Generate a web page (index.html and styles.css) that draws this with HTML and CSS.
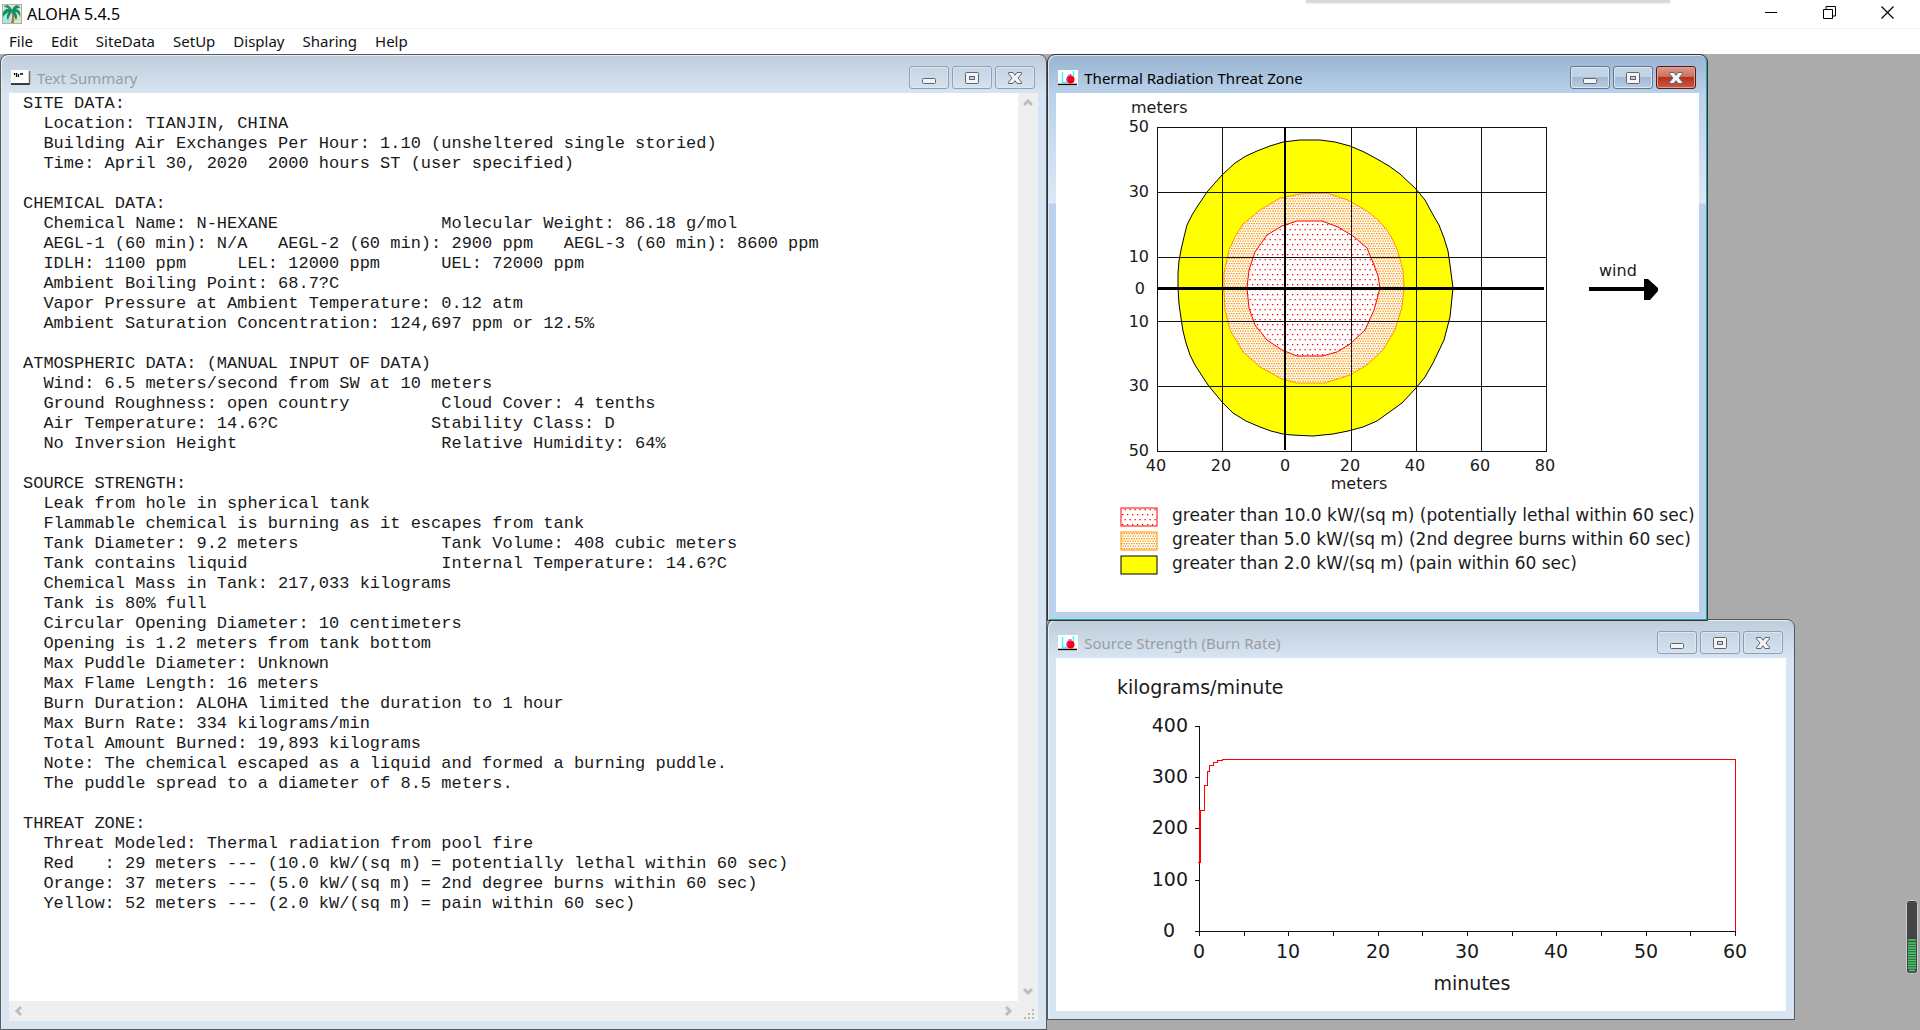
FILE: index.html
```html
<!DOCTYPE html>
<html lang="en">
<head>
    <meta charset="UTF-8">
    <meta name="viewport" content="width=device-width, initial-scale=1.0">
    <title>ALOHA 5.4.5</title>
    <link rel="stylesheet" href="styles.css">
</head>
<body>
    <!-- shared icons -->
    <svg class="defs" width="0" height="0" aria-hidden="true">
        <symbol id="icon-min" viewBox="0 0 16 14">
            <rect x="1.5" y="7.5" width="13" height="5" rx="1" fill="#f4f4f4" stroke="#5f6470"/>
        </symbol>
        <symbol id="icon-max" viewBox="0 0 16 14">
            <rect x="1.5" y="1.5" width="13" height="11" rx="1" fill="#f4f4f4" stroke="#5f6470"/>
            <rect x="5.5" y="5.5" width="5" height="3" fill="#c3d0de" stroke="#5f6470"/>
        </symbol>
        <symbol id="icon-close" viewBox="0 0 16 14">
            <path d="M1.5 1.5h4.5l2 2.8 2-2.8h4.5v1.300L11 7l3.500 4.200v1.300H10L8 9.700 6 12.500H1.500v-1.300L5 7 1.500 2.800z" fill="#f4f4f4" stroke="#5f6470"/>
        </symbol>
        <symbol id="icon-graph" viewBox="0 0 20 16">
            <rect width="20" height="16" fill="#fff"/>
            <path d="M4.500 2v10.500H9M10.500 4v4M15.500 1v5" fill="none" stroke="#3ff" stroke-width="1.500"/>
            <circle cx="12.500" cy="9.500" r="4" fill="#f00"/>
            <path d="M9.500 7v5M12.500 4v3" stroke="#f0f" stroke-width="1.500"/>
            <path d="M0 14.500h19" stroke="#000" stroke-width="1.500"/>
        </symbol>
    </svg>

    <header class="titlebar">
        <svg class="app-icon" viewBox="0 0 20 20" aria-hidden="true">
            <rect width="20" height="20" fill="#b0b0a8"/>
            <rect x="1" y="1" width="18" height="18" fill="#dde5c8"/>
            <path d="M1 8h7v11H1z" fill="#aee4e4"/>
            <path d="M9.500 8c1 3 .5 7-.5 11h3c.5-4 .3-8-.7-11z" fill="#a87850"/>
            <path d="M10 6C8 1 4 0 2 3c3 0 4 1 5 2C3 4 0 8 1 13c2-3 4-4 6-5-2 2-3 5-1 8 1-3 2-6 4-8 2 2 2 5 4 8 2-3 1-6-1-8 2 0 4 2 5 5 1-4 0-7-4-8 1-1 3-1 4-1-1-4-6-4-8 2z" fill="#0f8f6a"/>
        </svg>
        <h1 class="app-title">ALOHA 5.4.5</h1>
        <button class="sys-button" aria-label="Minimize">
            <svg width="13" height="13"><path d="M0 6.500h12" stroke="#000"/></svg>
        </button>
        <button class="sys-button" aria-label="Restore">
            <svg width="13" height="13"><path d="M.5 3.500h9v9h-9zM3 3V.5h9.500V10H10" fill="none" stroke="#000"/></svg>
        </button>
        <button class="sys-button" aria-label="Close">
            <svg width="13" height="13"><path d="M.5.5l12 12M12.500.5l-12 12" stroke="#000" stroke-width="1.200"/></svg>
        </button>
    </header>
    <div class="top-shade"></div>

    <nav class="menubar">
        <a href="#">File</a>
        <a href="#">Edit</a>
        <a href="#">SiteData</a>
        <a href="#">SetUp</a>
        <a href="#">Display</a>
        <a href="#">Sharing</a>
        <a href="#">Help</a>
    </nav>

    <main class="desktop">
        <section class="window text-window">
            <div class="caption">
                <svg class="caption-icon" viewBox="0 0 20 16" aria-hidden="true">
                    <rect width="18" height="14" fill="#fff"/>
                    <path d="M0 14h19" stroke="#000" stroke-width="1.500"/>
                    <path d="M18.500 1v13" stroke="#666" stroke-width="1.500"/>
                    <path d="M3.500 3v2M5.500 3v4M7.500 4v3M9 4h3" stroke="#000" stroke-width="1.300"/>
                </svg>
                <h2>Text Summary</h2>
                <button aria-label="Minimize"><svg><use href="#icon-min"/></svg></button>
                <button aria-label="Maximize"><svg><use href="#icon-max"/></svg></button>
                <button aria-label="Close"><svg><use href="#icon-close"/></svg></button>
            </div>
            <div class="text-client">
<pre class="report">SITE DATA:
  Location: TIANJIN, CHINA
  Building Air Exchanges Per Hour: 1.10 (unsheltered single storied)
  Time: April 30, 2020  2000 hours ST (user specified)

CHEMICAL DATA:
  Chemical Name: N-HEXANE                Molecular Weight: 86.18 g/mol
  AEGL-1 (60 min): N/A   AEGL-2 (60 min): 2900 ppm   AEGL-3 (60 min): 8600 ppm
  IDLH: 1100 ppm     LEL: 12000 ppm      UEL: 72000 ppm
  Ambient Boiling Point: 68.7?C
  Vapor Pressure at Ambient Temperature: 0.12 atm
  Ambient Saturation Concentration: 124,697 ppm or 12.5%

ATMOSPHERIC DATA: (MANUAL INPUT OF DATA)
  Wind: 6.5 meters/second from SW at 10 meters
  Ground Roughness: open country         Cloud Cover: 4 tenths
  Air Temperature: 14.6?C               Stability Class: D
  No Inversion Height                    Relative Humidity: 64%

SOURCE STRENGTH:
  Leak from hole in spherical tank
  Flammable chemical is burning as it escapes from tank
  Tank Diameter: 9.2 meters              Tank Volume: 408 cubic meters
  Tank contains liquid                   Internal Temperature: 14.6?C
  Chemical Mass in Tank: 217,033 kilograms
  Tank is 80% full
  Circular Opening Diameter: 10 centimeters
  Opening is 1.2 meters from tank bottom
  Max Puddle Diameter: Unknown
  Max Flame Length: 16 meters
  Burn Duration: ALOHA limited the duration to 1 hour
  Max Burn Rate: 334 kilograms/min
  Total Amount Burned: 19,893 kilograms
  Note: The chemical escaped as a liquid and formed a burning puddle.
  The puddle spread to a diameter of 8.5 meters.

THREAT ZONE:
  Threat Modeled: Thermal radiation from pool fire
  Red   : 29 meters --- (10.0 kW/(sq m) = potentially lethal within 60 sec)
  Orange: 37 meters --- (5.0 kW/(sq m) = 2nd degree burns within 60 sec)
  Yellow: 52 meters --- (2.0 kW/(sq m) = pain within 60 sec)</pre>
                <div class="scroll-v">
                    <button aria-label="Scroll up"><svg width="12" height="12"><path d="M2 8l4-4 4 4"/></svg></button>
                    <button aria-label="Scroll down"><svg width="12" height="12"><path d="M2 4l4 4 4-4"/></svg></button>
                </div>
                <div class="scroll-h">
                    <button aria-label="Scroll left"><svg width="12" height="12"><path d="M8 2L4 6l4 4"/></svg></button>
                    <button aria-label="Scroll right"><svg width="12" height="12"><path d="M4 2l4 4-4 4"/></svg></button>
                </div>
                <svg class="grip" viewBox="0 0 20 20" aria-hidden="true">
                    <path d="M6 16h2v2H6zM10 16h2v2h-2zM14 16h2v2h-2zM10 12h2v2h-2zM14 12h2v2h-2zM14 8h2v2h-2z" fill="#b8b8b8"/>
                </svg>
            </div>
        </section>

        <div class="plots">
            <section class="window active">
                <div class="caption">
                    <svg class="caption-icon" aria-hidden="true"><use href="#icon-graph"/></svg>
                    <h2>Thermal Radiation Threat Zone</h2>
                    <button aria-label="Minimize"><svg><use href="#icon-min"/></svg></button>
                    <button aria-label="Maximize"><svg><use href="#icon-max"/></svg></button>
                    <button class="close" aria-label="Close"><svg><use href="#icon-close"/></svg></button>
                </div>
                <svg class="plot" width="643" height="519" viewBox="0 0 643 519" role="img" aria-label="Thermal radiation threat zone">
                    <defs>
                        <pattern id="red-dots" width="5" height="10" patternUnits="userSpaceOnUse">
                            <rect width="5" height="10" fill="#fff"/>
                            <path d="M1 1h1.300v1.300H1zM3.500 6h1.300v1.300H3.500z" fill="#f00"/>
                        </pattern>
                        <pattern id="orange-dots" width="5" height="5" patternUnits="userSpaceOnUse">
                            <rect width="5" height="5" fill="#fff"/>
                            <path d="M0 0h1.500v1.300H0zM2.500 0H4v1.300H2.500zM1.300 2.500h1.500v1.300H1.300zM3.800 2.500H5v1.300H3.800z" fill="#ff9400"/>
                        </pattern>
                    </defs>
                    <polygon class="zone-yellow" points="257,47 264,47 279,49 294,53 308,59 321,66 333,73 344,81 360,96 369,107 376,120 383,132 388,145 392,158 394,172 397,195 394,224 388,247 377,270 369,284 360,295 346,310 321,328 307,334 292,338 277,341 257,343 236,342 227,341 215,338 204,334 190,328 177,320 166,309 152,292 139,272 134,262 130,250 127,238 125,225 123,211 122,195 122,180 123,168 125,157 128,144 131,132 136,122 141,114 151,99 166,82 179,70 190,63 201,58 214,53 227,49 244,47"/>
                    <polygon class="zone-orange" points="244,101 271,100 292,107 311,118 322,127 331,137 337,147 342,159 347,177 348,195 346,214 339,237 327,257 311,272 294,282 269,290 241,290 226,286 204,274 187,259 174,237 169,217 168,198 168,180 173,157 179,144 187,131 204,117 224,105"/>
                    <polygon class="zone-red" points="241,128 266,128 282,134 297,143 311,155 318,172 322,183 324,195 318,217 309,237 294,251 281,259 266,263 241,263 226,257 211,247 199,232 193,215 191,195 193,177 199,159 211,142 226,133"/>
                    <path class="grid" d="M101 34H490V358H101ZM166 34V358M295 34V358M360 34V358M425 34V358M101 99H490M101 164H490M101 228H490M101 293H490"/>
                    <path d="M229 34V357" stroke="#000" stroke-width="2"/>
                    <path d="M101 195.500H488" stroke="#000" stroke-width="3"/>
                    <text x="75" y="20">meters</text>
                    <g class="y-labels">
                        <text x="93" y="39">50</text>
                        <text x="93" y="104">30</text>
                        <text x="93" y="169">10</text>
                        <text x="89" y="201">0</text>
                        <text x="93" y="234">10</text>
                        <text x="93" y="298">30</text>
                        <text x="93" y="363">50</text>
                    </g>
                    <g class="x-labels">
                        <text x="100" y="378">40</text>
                        <text x="165" y="378">20</text>
                        <text x="229" y="378">0</text>
                        <text x="294" y="378">20</text>
                        <text x="359" y="378">40</text>
                        <text x="424" y="378">60</text>
                        <text x="489" y="378">80</text>
                        <text x="303" y="396">meters</text>
                    </g>
                    <text x="543" y="183">wind</text>
                    <path d="M533 194h55v-8h4l10 9v3l-8 9h-6v-9h-55z"/>
                    <rect class="zone-red" x="65" y="415" width="36" height="18"/>
                    <rect class="zone-orange" x="65" y="439" width="36" height="18"/>
                    <rect class="zone-yellow" x="65" y="463" width="36" height="18"/>
                    <g class="legend">
                        <text x="116" y="428">greater than 10.0 kW/(sq m) (potentially lethal within 60 sec)</text>
                        <text x="116" y="452">greater than 5.0 kW/(sq m) (2nd degree burns within 60 sec)</text>
                        <text x="116" y="476">greater than 2.0 kW/(sq m) (pain within 60 sec)</text>
                    </g>
                </svg>
            </section>

            <section class="window source-window">
                <div class="caption">
                    <svg class="caption-icon" aria-hidden="true"><use href="#icon-graph"/></svg>
                    <h2>Source Strength (Burn Rate)</h2>
                    <button aria-label="Minimize"><svg><use href="#icon-min"/></svg></button>
                    <button aria-label="Maximize"><svg><use href="#icon-max"/></svg></button>
                    <button aria-label="Close"><svg><use href="#icon-close"/></svg></button>
                </div>
                <svg class="plot plot-large" width="730" height="353" viewBox="0 0 730 353" role="img" aria-label="Burn rate">
                    <path class="grid" d="M143 68V273M139 68h4M139 119h4M139 170h4M139 222h4M139 273H679M143 273v5M188 273v5M232 273v5M277 273v5M322 273v5M366 273v5M411 273v5M456 273v5M500 273v5M545 273v5M590 273v5M634 273v5M679 273v5"/>
                    <path class="burn-rate" d="M142 204H144V152H148V127H151V113H153V107H157V104H161V102H166V101H679V273"/>
                    <path class="burn-rate" d="M143 204V152"/>
                    <text x="61" y="36">kilograms/minute</text>
                    <g class="y-labels">
                        <text x="132" y="74">400</text>
                        <text x="132" y="125">300</text>
                        <text x="132" y="176">200</text>
                        <text x="132" y="228">100</text>
                        <text x="119" y="279">0</text>
                    </g>
                    <g class="x-labels">
                        <text x="143" y="300">0</text>
                        <text x="232" y="300">10</text>
                        <text x="322" y="300">20</text>
                        <text x="411" y="300">30</text>
                        <text x="500" y="300">40</text>
                        <text x="590" y="300">50</text>
                        <text x="679" y="300">60</text>
                        <text x="416" y="332">minutes</text>
                    </g>
                </svg>
            </section>
        </div>
    </main>

    <!-- level gauge on the right edge -->
    <svg class="gauge" width="12" height="74" viewBox="0 0 12 74" aria-hidden="true">
        <rect x=".5" y=".5" width="11" height="73" rx="3" fill="#444" stroke="#ccc"/>
        <path d="M2 40h8M2 43h8M2 45.500h8M2 48h8M2 50.500h8M2 53h8M2 55.500h8M2 58h8M2 60.500h8M2 63h8M2 65.500h8M2 68h8M3 70.500h6" stroke="#3fd468" stroke-width="1.500"/>
    </svg>
</body>
</html>
```
FILE: styles.css
```css
* {
    box-sizing: border-box;
}
body {
    margin: 0;
    min-height: 100vh;
    display: flex;
    flex-direction: column;
    position: relative;
    background: #ababab;
    font-family: "Noto Sans", "Open Sans", sans-serif;
    font-size: 15px;
    color: #000;
}
h1, h2 {
    margin: 0;
    font-size: 15px;
    font-weight: normal;
}
button {
    padding: 0;
    border: none;
    background: none;
}
.defs {
    position: absolute;
}
.titlebar {
    display: flex;
    align-items: center;
    height: 28px;
    padding: 0 4px 0 2px;
    background: #fff;
}
.app-icon {
    width: 20px;
    height: 20px;
}
.app-title {
    flex: 1;
    padding-left: 5px;
    font-size: 16px;
}
.sys-button {
    width: 58px;
    height: 28px;
}
.top-shade {
    position: absolute;
    top: 0;
    left: 68%;
    width: 19%;
    height: 3px;
    background: #d8d8d8;
    box-shadow: 0 0 3px #ddd;
}
.menubar {
    display: flex;
    align-items: center;
    height: 26px;
    padding-bottom: 2px;
    border-top: 1px solid #f2f2f2;
    background: #fff;
}
.menubar a {
    padding: 0 9px;
    color: #111;
    text-decoration: none;
}
.desktop {
    flex: 1;
    display: grid;
    grid-template-columns: 6fr 5fr;
}
.plots {
    display: flex;
    flex-direction: column;
    align-items: flex-start;
}

/* MDI child windows */
.window {
    padding: 0 8px 8px;
    border: 1px solid #55585c;
    border-radius: 8px 8px 0 0;
    background: linear-gradient(#bfcddb, #d7e4f2 38px);
    box-shadow: inset 1px 1px 0 #e6eef6;
}
.window.active {
    position: relative;
    z-index: 1;
    border-color: #333;
    background: linear-gradient(#99b4d1, #b9d1ea 38px, #dce9f7 148px, #b9d1ea 149px);
    box-shadow: inset 1px 1px 0 #dbe8f5, inset -1px -1px 0 #1fa3ad;
}
.source-window {
    margin-top: -2px;
}
.caption {
    display: flex;
    align-items: center;
    gap: 3px;
    height: 38px;
    padding: 7px 3px 0 2px;
}
.caption h2 {
    flex: 1;
    padding-left: 3px;
    color: #9a9da0;
}
.active .caption h2 {
    color: #000;
}
.caption-icon {
    width: 20px;
    height: 16px;
}
.caption button {
    display: flex;
    align-items: center;
    justify-content: center;
    width: 40px;
    height: 23px;
    border: 1px solid #8e9fba;
    border-radius: 3px;
    box-shadow: inset 0 0 0 1px #dce6f1;
}
.caption button svg {
    width: 16px;
    height: 14px;
}
.active .caption button {
    border-color: #66788f;
    background: linear-gradient(#c2d3e6 50%, #a2b9d2 50%, #b8cde3);
}
.active .caption .close {
    border-color: #5a1a1c;
    background: linear-gradient(#dc9a8c, #cc6a58 50%, #b5301c 50%, #cc5a44);
    box-shadow: inset 0 0 0 1px #e0a090;
}

/* text summary */
.text-window {
    display: flex;
    flex-direction: column;
}
.text-client {
    flex: 1;
    display: grid;
    grid-template-columns: 1fr 20px;
    grid-template-rows: 1fr 20px;
    background: #efefef;
}
.report {
    margin: 0;
    padding: 1px 0 0 14px;
    overflow: hidden;
    background: #fff;
    color: #1a1a1a;
    font-family: "Liberation Mono", "Courier New", monospace;
    font-size: 17px;
    line-height: 20px;
}
.scroll-v, .scroll-h {
    display: flex;
    justify-content: space-between;
}
.scroll-v {
    flex-direction: column;
}
.text-client button {
    display: flex;
    align-items: center;
    justify-content: center;
    width: 20px;
    height: 20px;
}
.text-client button path {
    fill: none;
    stroke: #bdbdbd;
    stroke-width: 3;
}
.grip {
    width: 20px;
    height: 20px;
}

/* plots */
.plot {
    display: block;
    background: #fff;
    font-family: "DejaVu Sans", Verdana, sans-serif;
    font-size: 16px;
}
.plot-large {
    font-size: 19px;
}
.plot text {
    fill: #1a1a1a;
}
.legend {
    font-size: 17px;
}
.y-labels {
    text-anchor: end;
}
.x-labels {
    text-anchor: middle;
}
.grid {
    fill: none;
    stroke: #111;
    shape-rendering: crispEdges;
}
.zone-yellow {
    fill: #ff0;
    stroke: #000;
}
.zone-orange {
    fill: url(#orange-dots);
    stroke: #ff9400;
}
.zone-red {
    fill: url(#red-dots);
    stroke: #f00;
}
.burn-rate {
    fill: none;
    stroke: #f00;
    shape-rendering: crispEdges;
}
.gauge {
    position: absolute;
    right: 2px;
    bottom: 56px;
}
```
